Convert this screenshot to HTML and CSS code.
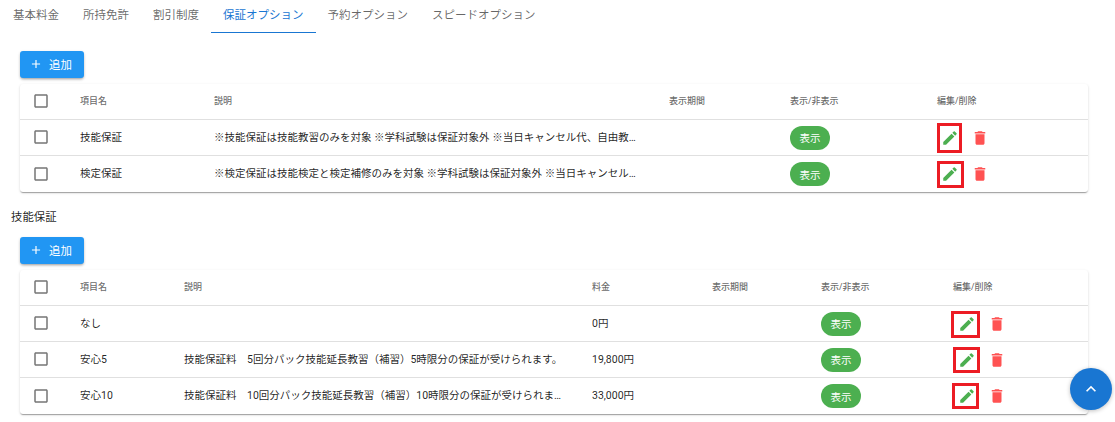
FILE: index.html
```html
<!DOCTYPE html>
<html lang="ja">
<head>
<meta charset="utf-8">
<title>保証オプション</title>
<link rel="stylesheet" href="styles.css">
</head>
<body>
<svg class="defs" width="0" height="0" aria-hidden="true">
  <symbol id="i-pencil" viewBox="0 0 24 24"><path d="M3 17.25V21h3.75L17.81 9.94l-3.75-3.75L3 17.25zM20.71 7.04a1 1 0 0 0 0-1.41l-2.34-2.34a1 1 0 0 0-1.41 0l-1.83 1.83 3.75 3.75 1.83-1.83z"/></symbol>
  <symbol id="i-trash" viewBox="0 0 24 24"><path d="M6 19c0 1.1.9 2 2 2h8c1.1 0 2-.9 2-2V7H6v12zM19 4h-3.5l-1-1h-5l-1 1H5v2h14V4z"/></symbol>
  <symbol id="i-plus" viewBox="0 0 24 24"><path d="M19 13h-6v6h-2v-6H5v-2h6V5h2v6h6v2z"/></symbol>
  <symbol id="i-up" viewBox="0 0 24 24"><path d="M7.41 15.41 12 10.83l4.59 4.58L18 14l-6-6-6 6z"/></symbol>
  <symbol id="i-box" viewBox="0 0 24 24"><path d="M19 5v14H5V5h14m0-2H5c-1.1 0-2 .9-2 2v14c0 1.1.9 2 2 2h14c1.1 0 2-.9 2-2V5c0-1.1-.9-2-2-2z"/></symbol>
</svg>

<nav class="tabs">
  <a class="tab">基本料金</a>
  <a class="tab">所持免許</a>
  <a class="tab">割引制度</a>
  <a class="tab active">保証オプション</a>
  <a class="tab">予約オプション</a>
  <a class="tab">スピードオプション</a>
</nav>

<main class="content">
  <button class="add first"><svg class="plus"><use href="#i-plus"/></svg>追加</button>
  <div class="card">
    <table class="tbl tbl-a">
      <colgroup><col class="c-check"><col class="a-name"><col class="a-desc"><col class="a-period"><col class="a-vis"><col></colgroup>
      <thead>
        <tr><th class="check"><svg class="box"><use href="#i-box"/></svg></th><th>項目名</th><th>説明</th><th>表示期間</th><th>表示/非表示</th><th>編集/削除</th></tr>
      </thead>
      <tbody>
        <tr>
          <td class="check"><svg class="box"><use href="#i-box"/></svg></td><td>技能保証</td>
          <td class="desc">※技能保証は技能教習のみを対象 ※学科試験は保証対象外 ※当日キャンセル代、自由教…</td><td></td>
          <td><span class="chip">表示</span></td>
          <td><div class="actions a-actions"><span class="edit-wrap"><svg class="ico edit"><use href="#i-pencil"/></svg><i class="mark m1"></i></span><svg class="ico del"><use href="#i-trash"/></svg></div></td>
        </tr>
        <tr>
          <td class="check"><svg class="box"><use href="#i-box"/></svg></td><td>検定保証</td>
          <td class="desc">※検定保証は技能検定と検定補修のみを対象 ※学科試験は保証対象外 ※当日キャンセル…</td><td></td>
          <td><span class="chip">表示</span></td>
          <td><div class="actions a-actions"><span class="edit-wrap"><svg class="ico edit"><use href="#i-pencil"/></svg><i class="mark m2"></i></span><svg class="ico del"><use href="#i-trash"/></svg></div></td>
        </tr>
      </tbody>
    </table>
  </div>

  <h2 class="section">技能保証</h2>

  <button class="add"><svg class="plus"><use href="#i-plus"/></svg>追加</button>
  <div class="card">
    <table class="tbl tbl-b">
      <colgroup><col class="c-check"><col class="b-name"><col class="b-desc"><col class="b-price"><col class="b-period"><col class="b-vis"><col></colgroup>
      <thead>
        <tr><th class="check"><svg class="box"><use href="#i-box"/></svg></th><th>項目名</th><th>説明</th><th>料金</th><th>表示期間</th><th>表示/非表示</th><th>編集/削除</th></tr>
      </thead>
      <tbody>
        <tr>
          <td class="check"><svg class="box"><use href="#i-box"/></svg></td><td>なし</td><td class="desc"></td><td>0円</td><td></td>
          <td><span class="chip">表示</span></td>
          <td><div class="actions b-actions"><span class="edit-wrap"><svg class="ico edit"><use href="#i-pencil"/></svg><i class="mark m3"></i></span><svg class="ico del"><use href="#i-trash"/></svg></div></td>
        </tr>
        <tr>
          <td class="check"><svg class="box"><use href="#i-box"/></svg></td><td>安心5</td><td class="desc">技能保証料　5回分パック技能延長教習（補習）5時限分の保証が受けられます。</td><td>19,800円</td><td></td>
          <td><span class="chip">表示</span></td>
          <td><div class="actions b-actions"><span class="edit-wrap"><svg class="ico edit"><use href="#i-pencil"/></svg><i class="mark m4"></i></span><svg class="ico del"><use href="#i-trash"/></svg></div></td>
        </tr>
        <tr>
          <td class="check"><svg class="box"><use href="#i-box"/></svg></td><td>安心10</td><td class="desc">技能保証料　10回分パック技能延長教習（補習）10時限分の保証が受けられま…</td><td>33,000円</td><td></td>
          <td><span class="chip">表示</span></td>
          <td><div class="actions b-actions"><span class="edit-wrap"><svg class="ico edit"><use href="#i-pencil"/></svg><i class="mark m5"></i></span><svg class="ico del"><use href="#i-trash"/></svg></div></td>
        </tr>
      </tbody>
    </table>
  </div>
</main>

<button class="top" aria-label="上へ"><svg class="top-ico"><use href="#i-up"/></svg></button>
</body>
</html>
```

FILE: styles.css
```css
* { box-sizing: border-box; }
html, body { margin: 0; height: 100%; overflow: hidden; }
body {
  background: #fff;
  color: rgba(0,0,0,.87);
  font-family: Roboto, "Noto Sans CJK JP", sans-serif;
  font-size: 10.5px;
}
.defs { position: absolute; }

.tabs { display: flex; height: 33px; padding-left: 1px; }
.tab {
  display: flex; align-items: center; justify-content: center;
  height: 33px; padding: 0 12px 5px;
  font-size: 11.5px; color: rgba(0,0,0,.6);
  border-bottom: 1px solid transparent;
}
.tab.active { color: #1976d2; border-bottom-color: #1976d2; }

.content { padding: 0 27px 0 20px; }

.add {
  display: flex; align-items: center; justify-content: flex-start; gap: 6px;
  width: 64px; height: 27px; padding: 0 0 2px 9px; border: 0; border-radius: 3px;
  background: #2196f3; color: #fff; font: inherit; font-size: 11.4px;
  box-shadow: 0 2px 3px -1px rgba(0,0,0,.3), 0 1px 3px rgba(0,0,0,.15);
}
.add.first { margin-top: 18px; }
.plus { width: 14px; height: 14px; fill: #fff; }

.card {
  margin-top: 6px; background: #fff; border-radius: 3px;
  box-shadow: 0 2px 1px -1px rgba(0,0,0,.2), 0 1px 1px rgba(0,0,0,.14), 0 1px 3px rgba(0,0,0,.12);
}
.tbl { width: 100%; border-collapse: separate; border-spacing: 0; table-layout: fixed; }
.tbl th, .tbl td {
  height: 36px; padding: 0 0 3px; text-align: left; white-space: nowrap;
  border-bottom: 1px solid #e0e0e0;
}
.tbl th { font-size: 9px; font-weight: 500; color: rgba(0,0,0,.6); }
.tbl tbody tr:last-child td { border-bottom: 0; }
.tbl .check { padding: 0 0 1px 12px; }
.box { display: block; width: 18px; height: 18px; fill: #757575; }

.c-check { width: 60px; }
.a-name { width: 134px; } .a-desc { width: 455px; } .a-period { width: 121px; } .a-vis { width: 147px; }
.b-name { width: 104px; } .b-desc { width: 408px; } .b-price { width: 120px; } .b-period { width: 109px; } .b-vis { width: 132px; }

.chip {
  display: inline-flex; align-items: center; justify-content: center;
  width: 40px; height: 24px; border-radius: 12px; margin-top: 3px;
  background: #4caf50; color: #fff; font-size: 10.5px;
}
.actions { display: flex; align-items: center; gap: 12px; height: 18px; margin-top: 3px; }
.a-actions { margin-left: 4px; }
.b-actions { margin-left: 5px; }
.edit-wrap { position: relative; display: block; width: 18px; height: 18px; flex: none; }
.mark { position: absolute; border: 3px solid #ec1c24; }
.m1 { left: -4px; top: -6px; width: 25px; height: 30px; }
.m2 { left: -4px; top: -4px; width: 27px; height: 27px; }
.m3 { left: -7px; top: -4px; width: 29px; height: 27px; }
.m4 { left: -5px; top: -4px; width: 27px; height: 26px; }
.m5 { left: -6px; top: -4px; width: 27px; height: 26px; }
.ico { display: block; width: 18px; height: 18px; flex: none; }
.edit { fill: #4caf50; }
.del { fill: #ff5252; }

.section { margin: 18px 0 13px -9px; font-size: 11.4px; font-weight: 400; line-height: 14px; }

.top {
  position: absolute; left: 1070px; top: 368px;
  display: flex; align-items: center; justify-content: center;
  width: 42px; height: 42px; padding: 0; border: 0; border-radius: 50%;
  background: #1976d2;
  box-shadow: 0 1px 4px rgba(0,0,0,.25);
}
.top-ico { width: 20px; height: 20px; fill: #fff; }
```
